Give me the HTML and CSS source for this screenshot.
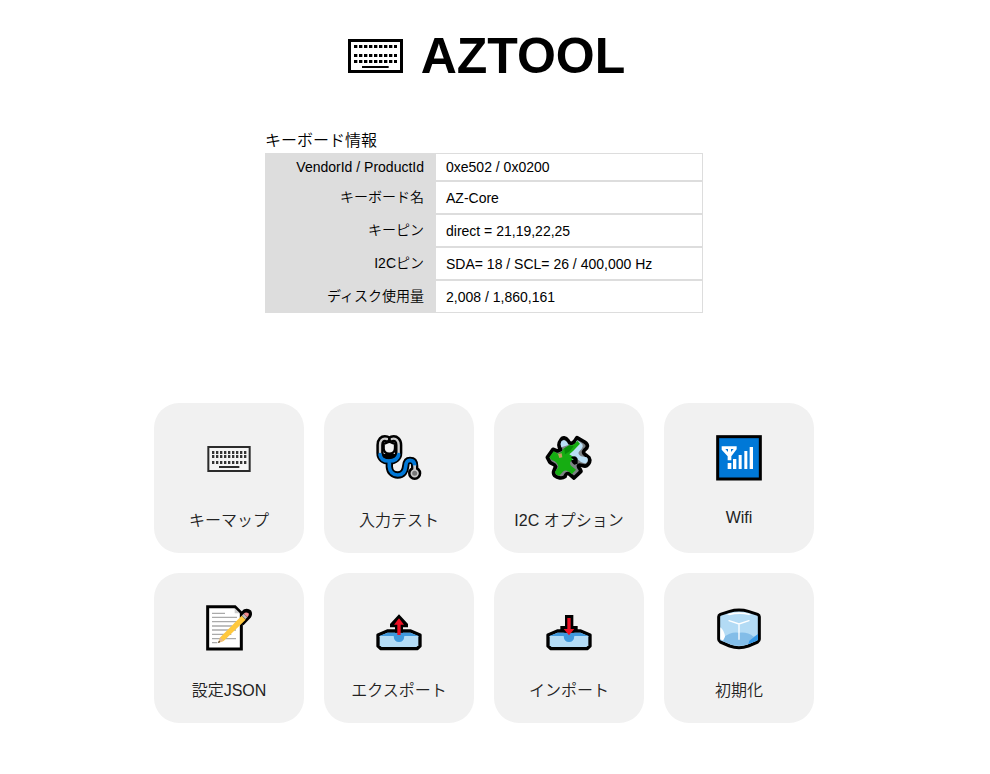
FILE: index.html
```html
<!DOCTYPE html>
<html lang="ja">
<head>
<meta charset="utf-8">
<title>AZTOOL</title>
<link rel="stylesheet" href="styles.css">
</head>
<body>
<header>
  <h1 class="title">
    <svg class="logo" viewBox="0 0 165 102" aria-hidden="true">
      <rect x="4.500" y="4.500" width="156" height="93" fill="none" stroke="#000" stroke-width="9"/>
      <path d="M18 22.500H147M18 49.500H147M18 67.500H147" stroke="#000" stroke-width="9" stroke-dasharray="10 5"/>
      <path d="M42 84H122" stroke="#000" stroke-width="6"/>
    </svg>
    <span>AZTOOL</span>
  </h1>
</header>
<main>
  <table class="info">
    <caption>キーボード情報</caption>
    <tbody>
      <tr class="compact"><th scope="row">VendorId / ProductId</th><td>0xe502 / 0x0200</td></tr>
      <tr><th scope="row">キーボード名</th><td>AZ-Core</td></tr>
      <tr><th scope="row">キーピン</th><td>direct = 21,19,22,25</td></tr>
      <tr><th scope="row">I2Cピン</th><td>SDA= 18 / SCL= 26 / 400,000 Hz</td></tr>
      <tr><th scope="row">ディスク使用量</th><td>2,008 / 1,860,161</td></tr>
    </tbody>
  </table>
  <nav class="menu">
    <button class="tile" type="button">
      <svg class="icon" viewBox="-3 0 180 165" aria-hidden="true">
        <rect x="25" y="51" width="124" height="72" fill="#f4f4f4" stroke="#2b2b2b" stroke-width="6"/>
        <path d="M36 67.500H139M36 79.500H139M36 97.500H139" stroke="#333" stroke-width="9" stroke-dasharray="7 5"/>
        <path d="M57 111H118" stroke="#2b2b2b" stroke-width="6"/>
      </svg>
      <span>キーマップ</span>
    </button>
    <button class="tile" type="button">
      <svg class="icon" viewBox="0 0 180 165" aria-hidden="true">
        <g fill="none" stroke-linecap="round" stroke-linejoin="round">
          <path d="M54 27C39 23 33 33 33 45V69C33 84 44 93 60 93C77 93 89 84 89 69V45C89 33 82 23 68 27M61 93V110C62 125 72 135 86 135C102 135 109 123 110 109C111 96 114 91 123 91C133 91 137 97 137 108V127" stroke="#000" stroke-width="22"/>
          <circle cx="137" cy="130" r="12" fill="#000" stroke="#000" stroke-width="16"/>
          <path d="M54 27C39 23 33 33 33 45V69C33 84 44 93 60 93C77 93 89 84 89 69V45C89 33 82 23 68 27" stroke="#d0d0d0" stroke-width="7"/>
          <path d="M33 74C35 87 45 93 60 93C76 93 87 86 89 74M61 93V110C62 125 72 135 86 135C102 135 109 123 110 109C111 96 114 91 123 91C132 91 136 96 137 105" stroke="#0078d7" stroke-width="11"/>
          <path d="M137 106V120" stroke="#c8c8c8" stroke-width="8" stroke-linecap="butt"/>
          <path d="M44 42L54 38Q61 33 68 38L78 42V56Q77 71 61 71Q45 71 44 56Z" fill="#f1f1f1" stroke="#000" stroke-width="7"/>
          <path d="M61 26V34" stroke="#000" stroke-width="6"/>
        </g>
        <path d="M40 72H82Q78 85 61 85Q44 85 40 72Z" fill="#000"/>
        <circle cx="137" cy="130" r="10" fill="#777" stroke="#c8c8c8" stroke-width="5"/>
      </svg>
      <span>入力テスト</span>
    </button>
    <button class="tile" type="button">
      <svg class="icon" viewBox="0 0 180 165" aria-hidden="true">
        <path d="M65 31C71 20 80 22 87 32C92 41 98 42 105 36L114 23L137 36C149 44 147 53 137 60C131 66 133 70 140 75L150 83C156 93 150 102 143 107C136 111 129 105 122 105C116 106 118 112 123 117L126 124L105 144L92 133C84 127 80 133 78 140C69 147 55 144 47 137C38 128 47 119 50 110C46 101 38 103 32 96L25 82L42 58L55 63L65 59C58 49 59 39 65 31Z" fill="#7d8285" stroke="#000" stroke-width="11" stroke-linejoin="round"/>
        <path d="M67 34Q75 26 84 36L88 45L67 52Q62 42 67 34ZM98 53Q107 48 114 31L126 39Q139 47 121 64Q114 72 126 79L143 82Q151 89 141 100Q128 100 119 90Q109 85 101 91L92 82L88 61Z" fill="#b9def5"/>
        <path d="M92 45C101 48 108 40 115 32L123 41L103 62L91 73L105 82L98 92Q89 98 96 107L111 119L98 133Q82 115 71 126L61 137Q49 134 48 125L58 112Q57 95 38 90L31 82L44 64L57 71Q70 66 72 57Z" fill="#16ad12"/>
        <path d="M76 55L92 46L104 49L93 63L78 73Z" fill="#078b08"/>
        <path d="M57 72L68 70L70 82L61 84Z" fill="#c69b63"/>
        <path d="M96 82Q109 74 116 86V101L106 104Q96 97 97 91L104 89Z" fill="#000"/>
      </svg>
      <span>I2C オプション</span>
    </button>
    <button class="tile latin" type="button">
      <svg class="icon" viewBox="0 0 180 165" aria-hidden="true">
        <rect x="26" y="20" width="128" height="127" fill="#0078d7" stroke="#000" stroke-width="9"/>
        <path d="M38 49H83V58L67 79V91H56V79L38 59ZM56 99H67V117H56ZM72 87H82V117H72ZM89 75H98V117H89ZM106 63H115V117H106ZM122 51H132V117H122Z" fill="#fff"/>
        <path d="M49 57H57V66ZM66 57H74L66 66Z" fill="#0078d7"/>
      </svg>
      <span>Wifi</span>
    </button>
    <button class="tile" type="button">
      <svg class="icon" viewBox="0 0 180 165" aria-hidden="true">
        <path d="M26 20H108L127 39V147H26Z" fill="#fff" stroke="#000" stroke-width="9"/>
        <path d="M107 24V40H123Z" fill="#ccc"/>
        <path d="M39 40H78M39 52H114M39 65H114M39 78H100M39 90H111M39 103H97M39 116H111M39 128H55" stroke="#aaa" stroke-width="4"/>
        <path d="M127 42L137 32Q146 28 153 35Q157 43 151 51L130 73" fill="#000" stroke="#000" stroke-width="9" stroke-linejoin="round"/>
        <path d="M57 129L64 112L128 47L140 59L74 123Z" fill="#ffc83d"/>
        <path d="M57 129L64 112L74 122Z" fill="#e8b988"/>
        <path d="M57 129L60 122L64 126Z" fill="#333"/>
        <path d="M128 47L134 41L145 52L139 58Z" fill="#bbb"/>
        <path d="M134 41Q141 34 149 40Q152 45 145 52Z" fill="#f28b8d"/>
      </svg>
      <span>設定JSON</span>
    </button>
    <button class="tile" type="button">
      <svg class="icon" viewBox="0 0 180 165" aria-hidden="true">
        <path d="M27 105L55 93H125L153 105V138L144 146H36L27 138Z" fill="#b3dbf5" stroke="#000" stroke-width="10" stroke-linejoin="round"/>
        <path d="M32 108L56 98H124L148 108H106Q105 126 90 126Q75 126 74 108Z" fill="#3f98dd"/>
        <path d="M90 43L117 72V82H102V98H78V82H63V72Z" fill="#000"/>
        <path d="M90 55L105 74H95V105H85V74H75Z" fill="#ed1024"/>
      </svg>
      <span>エクスポート</span>
    </button>
    <button class="tile" type="button">
      <svg class="icon" viewBox="0 0 180 165" aria-hidden="true">
        <path d="M27 105L55 93H125L153 105V138L144 146H36L27 138Z" fill="#b3dbf5" stroke="#000" stroke-width="10" stroke-linejoin="round"/>
        <path d="M32 108L56 98H124L148 108H106Q105 126 90 126Q75 126 74 108Z" fill="#3f98dd"/>
        <path d="M78 45H103V78H116V92L103 98H78L64 92V78H78Z" fill="#000"/>
        <path d="M85 54H95V87H106L90 106L74 87H85Z" fill="#ed1024"/>
      </svg>
      <span>インポート</span>
    </button>
    <button class="tile" type="button">
      <svg class="icon" viewBox="0 0 180 165" aria-hidden="true">
        <path d="M90 30Q105 30 118 34L146 43Q151 45 151 50V118Q151 123 146 126L118 138Q104 143 90 143Q76 143 62 138L34 126Q29 123 29 118V50Q29 45 34 43L62 34Q75 30 90 30Z" fill="#b3dbf5" stroke="#000" stroke-width="9" stroke-linejoin="round"/>
        <path d="M44 112Q65 94 90 98Q116 95 134 110L146 104V120L116 133Q90 142 64 133L34 121Z" fill="#83bde8"/>
        <path d="M147 102L121 122L118 133L144 122L147 118Z" fill="#3698e5"/>
        <path d="M34 82Q46 92 48 110L42 122L34 118Z" fill="#fff"/>
        <path d="M53 43Q90 30 127 43L120 45Q90 38 61 46Z" fill="#fff"/>
        <path d="M60 62L90 72L120 62M90 72V118" fill="none" stroke="#fff" stroke-width="4" stroke-linecap="round"/>
      </svg>
      <span>初期化</span>
    </button>
  </nav>
</main>
</body>
</html>
```
FILE: styles.css
```css
* {
  box-sizing: border-box;
}

body {
  margin: 0;
  padding: 24px 22px 50px 0;
  background: #fff;
  color: #000;
  font-family: "Liberation Sans", "Noto Sans CJK JP", sans-serif;
  font-size: 16px;
}

.title {
  display: flex;
  justify-content: center;
  align-items: center;
  gap: 18px;
  margin: 0;
  padding-left: 5px;
  font-size: 50px;
  line-height: 64px;
}

.logo {
  width: 55px;
  height: 34px;
}

.info {
  width: 438px;
  max-width: 100%;
  margin: 41px auto 0;
  border-spacing: 0;
  font-size: 14px;
  line-height: 20px;
}

.info caption {
  font-size: 16px;
  font-weight: 350;
  line-height: 24px;
  text-align: left;
}

.info tr {
  height: 33px;
}

.info .compact {
  height: 28px;
}

.info th,
.info td {
  padding: 0 10px;
  border: 1px solid #ddd;
}

.info th {
  width: 170px;
  padding-bottom: 2px;
  background: #ddd;
  font-weight: 350;
  text-align: right;
}

.info .compact th {
  padding-bottom: 0;
}

.menu {
  display: grid;
  grid-template-columns: repeat(auto-fit, 150px);
  justify-content: center;
  gap: 20px;
  max-width: 660px;
  margin: 90px auto 0;
}

.tile {
  display: flex;
  flex-direction: column;
  align-items: center;
  gap: 24px;
  height: 150px;
  padding: 27px 0 0;
  border: 0;
  border-radius: 25px;
  background: #f1f1f1;
  color: #222;
  font: inherit;
  font-weight: 350;
  line-height: 24px;
  cursor: pointer;
}

.latin {
  gap: 21px;
}

.icon {
  width: 60px;
  height: 55px;
}
```
